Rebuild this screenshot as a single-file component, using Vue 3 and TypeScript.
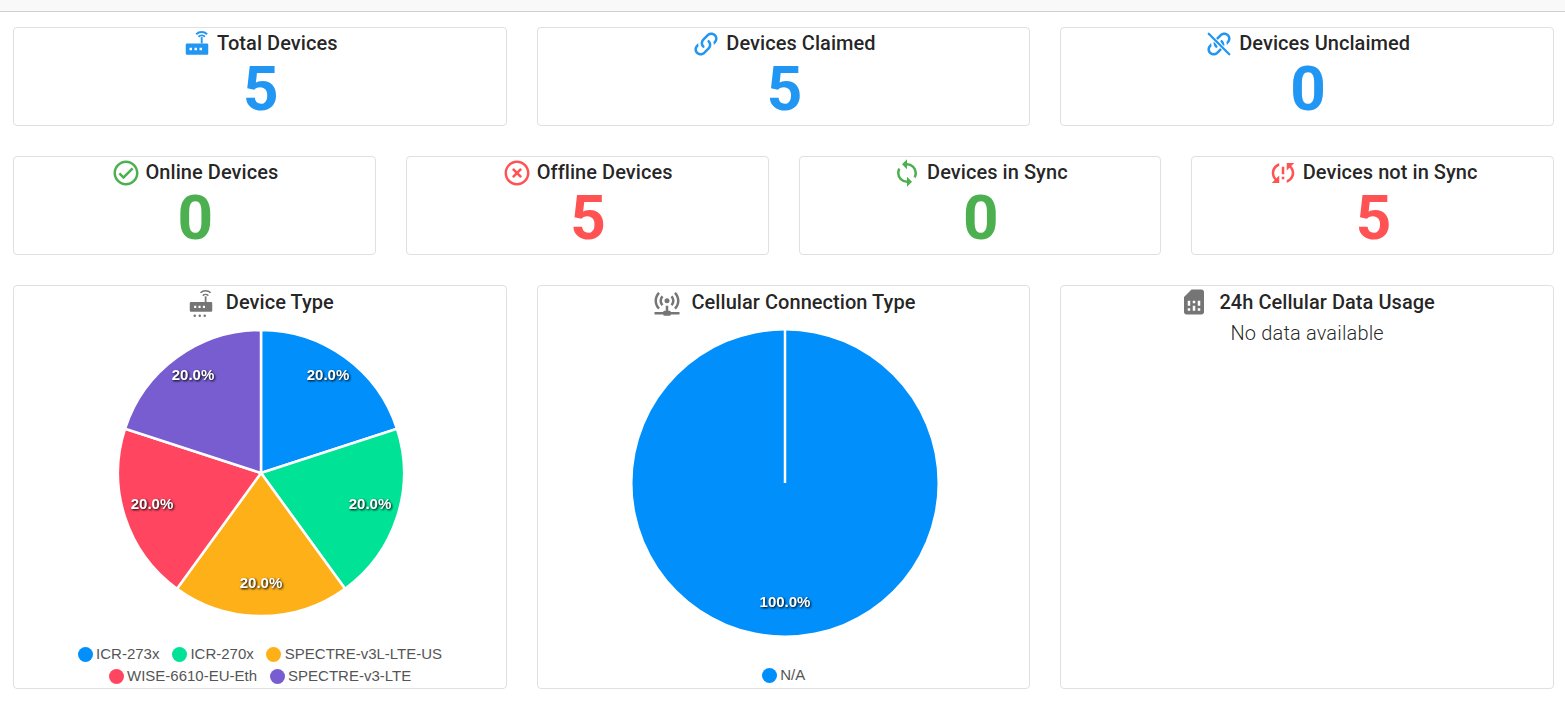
<script setup lang="ts">
interface Slice { d: string; color: string; x: number; y: number; label: string }
interface LegendItem { name: string; color: string; labelX: number; labelY: number }

const icons: Record<string, string> = {
  link: 'M10.59,13.41C11,13.8 11,14.44 10.59,14.83C10.2,15.22 9.56,15.22 9.17,14.83C7.22,12.88 7.22,9.71 9.17,7.76V7.76L12.71,4.22C14.66,2.27 17.83,2.27 19.78,4.22C21.73,6.17 21.73,9.34 19.78,11.29L18.29,12.78C18.3,11.96 18.17,11.14 17.89,10.36L18.36,9.88C19.54,8.71 19.54,6.81 18.36,5.64C17.19,4.46 15.29,4.46 14.12,5.64L10.59,9.17C9.41,10.34 9.41,12.24 10.59,13.41M13.41,9.17C13.8,8.78 14.44,8.78 14.83,9.17C16.78,11.12 16.78,14.29 14.83,16.24V16.24L11.29,19.78C9.34,21.73 6.17,21.73 4.22,19.78C2.27,17.83 2.27,14.66 4.22,12.71L5.71,11.22C5.7,12.04 5.83,12.86 6.11,13.65L5.64,14.12C4.46,15.29 4.46,17.19 5.64,18.36C6.81,19.54 8.71,19.54 9.88,18.36L13.41,14.83C14.59,13.66 14.59,11.76 13.41,10.59C13,10.2 13,9.56 13.41,9.17Z',
  check: 'M12 2C6.5 2 2 6.5 2 12S6.5 22 12 22 22 17.5 22 12 17.5 2 12 2M12 20C7.59 20 4 16.41 4 12S7.59 4 12 4 20 7.59 20 12 16.41 20 12 20M16.59 7.58L10 14.17L7.41 11.59L6 13L10 17L18 9L16.59 7.58Z',
  close: 'M12,20C7.59,20 4,16.41 4,12C4,7.59 7.59,4 12,4C16.41,4 20,7.59 20,12C20,16.41 16.41,20 12,20M12,2C6.47,2 2,6.47 2,12C2,17.53 6.47,22 12,22C17.53,22 22,17.53 22,12C22,6.47 17.53,2 12,2M14.59,8L12,10.59L9.41,8L8,9.41L10.59,12L8,14.59L9.41,16L12,13.41L14.59,16L16,14.59L13.41,12L16,9.41L14.59,8Z',
  sync: 'M12,18A6,6 0 0,1 6,12C6,11 6.25,10.03 6.7,9.2L5.24,7.74C4.46,8.97 4,10.43 4,12A8,8 0 0,0 12,20V23L16,19L12,15M12,4V1L8,5L12,9V6A6,6 0 0,1 18,12C18,13 17.75,13.97 17.3,14.8L18.76,16.26C19.54,15.03 20,13.57 20,12A8,8 0 0,0 12,4Z',
  syncAlert: 'M11 13H13V7H11M21 4H15V10L17.24 7.76C18.32 8.85 19 10.34 19 12C19 14.61 17.33 16.83 15 17.65V19.74C18.45 18.85 21 15.73 21 12C21 9.79 20.09 7.8 18.64 6.36M11 17H13V15H11M3 12C3 14.21 3.91 16.2 5.36 17.64L3 20H9V14L6.76 16.24C5.68 15.15 5 13.66 5 12C5 9.39 6.67 7.17 9 6.35V4.26C5.55 5.15 3 8.27 3 12Z',
  access: 'M4.93,3.93C3.12,5.74 2,8.24 2,11C2,13.76 3.12,16.26 4.93,18.07L6.34,16.66C4.89,15.22 4,13.22 4,11C4,8.79 4.89,6.78 6.34,5.34L4.93,3.93M19.07,3.93L17.66,5.34C19.11,6.78 20,8.79 20,11C20,13.22 19.11,15.22 17.66,16.66L19.07,18.07C20.88,16.26 22,13.76 22,11C22,8.24 20.88,5.74 19.07,3.93M7.76,6.76C6.67,7.85 6,9.35 6,11C6,12.65 6.67,14.15 7.76,15.24L9.17,13.83C8.45,13.11 8,12.11 8,11C8,9.89 8.45,8.89 9.17,8.17L7.76,6.76M16.24,6.76L14.83,8.17C15.55,8.89 16,9.89 16,11C16,12.11 15.55,13.11 14.83,13.83L16.24,15.24C17.33,14.15 18,12.65 18,11C18,9.35 17.33,7.85 16.24,6.76M12,9A2,2 0 0,0 10,11A2,2 0 0,0 12,13A2,2 0 0,0 14,11A2,2 0 0,0 12,9M11,15V19H10A1,1 0 0,0 9,20H2V22H9A1,1 0 0,0 10,23H14A1,1 0 0,0 15,22H22V20H15A1,1 0 0,0 14,19H13V15H11Z',
  sim: 'M19.99 4c0-1.1-.89-2-1.99-2h-8L4 8v12c0 1.1.9 2 2 2h12c1.1 0 2-.9 2-2l-.01-16zM9 19H7v-2h2v2zm8 0h-2v-2h2v2zm-8-4H7v-4h2v4zm4 4h-2v-4h2v4zm0-6h-2v-2h2v2zm4 2h-2v-4h2v4z',
  routerBody: 'M4,11.5H20A1,1 0 0,1 21,12.5V19.5A1,1 0 0,1 20,20.5H4A1,1 0 0,1 3,19.5V12.5A1,1 0 0,1 4,11.5ZM6,15V17H8V15ZM10,15V17H12V15ZM14,15V17H16V15Z',
  routerSmall: 'M4,12H20A1,1 0 0,1 21,13V18.8A1,1 0 0,1 20,19.8H4A1,1 0 0,1 3,18.8V13A1,1 0 0,1 4,12ZM6.5,15V16.7H8.2V15ZM10,15V16.7H11.7V15ZM13.5,15V16.7H15.2V15Z'
}

const stats = [
  { title: 'Total Devices', value: 5, tone: 'blue', icon: 'router' },
  { title: 'Devices Claimed', value: 5, tone: 'blue', icon: 'link' },
  { title: 'Devices Unclaimed', value: 0, tone: 'blue', icon: 'unlink' }
]
const health = [
  { title: 'Online Devices', value: 0, tone: 'green', icon: 'check' },
  { title: 'Offline Devices', value: 5, tone: 'red', icon: 'close' },
  { title: 'Devices in Sync', value: 0, tone: 'green', icon: 'sync' },
  { title: 'Devices not in Sync', value: 5, tone: 'red', icon: 'syncAlert' }
]

const legend: LegendItem[] = [
  { name: 'ICR-273x', color: '#008FFB', labelX: 67, labelY: -99 },
  { name: 'ICR-270x', color: '#00E396', labelX: 109, labelY: 30 },
  { name: 'SPECTRE-v3L-LTE-US', color: '#FEB019', labelX: 0, labelY: 109 },
  { name: 'WISE-6610-EU-Eth', color: '#FF4560', labelX: -109, labelY: 30 },
  { name: 'SPECTRE-v3-LTE', color: '#775DD0', labelX: -68, labelY: -99 }
]

const cx = 145
const cy = 145
const r = 143
const slices: Slice[] = legend.map((item, i) => {
  const a0 = (i / 5) * 2 * Math.PI - Math.PI / 2
  const a1 = ((i + 1) / 5) * 2 * Math.PI - Math.PI / 2
  const p = (a: number, rad: number) => `${cx + rad * Math.cos(a)} ${cy + rad * Math.sin(a)}`
  return {
    d: `M${cx} ${cy}L${p(a0, r)}A${r} ${r} 0 0 1 ${p(a1, r)}Z`,
    color: item.color,
    x: cx + item.labelX,
    y: cy + item.labelY,
    label: '20.0%'
  }
})
</script>

<template>
  <div class="page">
    <div class="topbar"></div>
    <main class="main">
      <section class="grid three">
        <div v-for="s in stats" :key="s.title" class="card stat">
          <div class="title">
            <svg class="icon" :class="s.tone" viewBox="0 0 24 24">
              <template v-if="s.icon === 'router'">
                <path fill-rule="evenodd" :d="icons.routerBody" />
                <rect x="15" y="6.5" width="1.5" height="5" />
                <path class="arc" d="M13.2 6.2a3.6 3.6 0 0 1 5.1 0" />
                <path class="arc" d="M11.4 4.2a6.2 6.2 0 0 1 8.7 0" />
              </template>
              <template v-else-if="s.icon === 'unlink'">
                <path :d="icons.link" />
                <line class="slash-gap" x1="3.8" y1="3.8" x2="20.2" y2="20.2" />
                <line class="slash" x1="3.8" y1="3.8" x2="20.2" y2="20.2" />
              </template>
              <path v-else :d="icons[s.icon]" />
            </svg>
            <span>{{ s.title }}</span>
          </div>
          <div class="value" :class="s.tone">{{ s.value }}</div>
        </div>
      </section>

      <section class="grid four">
        <div v-for="s in health" :key="s.title" class="card stat">
          <div class="title">
            <svg class="icon" :class="s.tone" viewBox="0 0 24 24"><path :d="icons[s.icon]" /></svg>
            <span>{{ s.title }}</span>
          </div>
          <div class="value" :class="s.tone">{{ s.value }}</div>
        </div>
      </section>

      <section class="grid three charts">
        <div class="card chart-card">
          <div class="title wide">
            <svg class="icon grey" viewBox="0 0 24 24">
              <path fill-rule="evenodd" :d="icons.routerSmall" />
              <rect x="15" y="7.5" width="1.4" height="5" />
              <path class="arc thin" d="M13.4 6.9a3.2 3.2 0 0 1 4.5 0" />
              <path class="arc thin" d="M11.6 4.6a5.7 5.7 0 0 1 8.1 0" />
              <circle cx="7" cy="23" r="1" /><circle cx="11" cy="23" r="1" /><circle cx="15" cy="23" r="1" />
            </svg>
            <span>Device Type</span>
          </div>
          <svg class="pie" width="290" height="290" viewBox="0 0 290 290">
            <path v-for="s in slices" :key="s.color" :d="s.d" :fill="s.color" stroke="#fff" stroke-width="2.5" />
            <text v-for="s in slices" :key="'l' + s.color" class="pct" :x="s.x" :y="s.y" text-anchor="middle" dominant-baseline="central">{{ s.label }}</text>
          </svg>
          <div class="legend">
            <span v-for="l in legend" :key="l.name" class="legend-item">
              <i class="dot" :style="{ background: l.color }"></i>{{ l.name }}
            </span>
          </div>
        </div>

        <div class="card chart-card">
          <div class="title wide">
            <svg class="icon grey" viewBox="0 0 24 24"><path :d="icons.access" /></svg>
            <span>Cellular Connection Type</span>
          </div>
          <svg class="pie large" width="308" height="310" viewBox="0 0 308 310">
            <circle cx="154" cy="155" r="152.5" fill="#008FFB" />
            <line x1="154" y1="2" x2="154" y2="155" stroke="#fff" stroke-width="2.5" />
            <text class="pct" x="154" y="273" text-anchor="middle" dominant-baseline="central">100.0%</text>
          </svg>
          <div class="legend single">
            <span class="legend-item"><i class="dot" style="background: #008FFB"></i>N/A</span>
          </div>
        </div>

        <div class="card chart-card">
          <div class="title wide">
            <svg class="icon grey" viewBox="0 0 24 24"><path :d="icons.sim" /></svg>
            <span>24h Cellular Data Usage</span>
          </div>
          <p class="empty">No data available</p>
        </div>
      </section>
    </main>
  </div>
</template>

<style scoped>
.page {
  font-family: Roboto, "Liberation Sans", sans-serif;
  color: rgba(0, 0, 0, 0.87);
}
.topbar {
  height: 11px;
  background: #f9f9f9;
  border-bottom: 1px solid #cfcfcf;
}
.main {
  display: flex;
  flex-direction: column;
  gap: 30px;
  padding: 15px 11px 0 13px;
}
.grid {
  display: grid;
  gap: 30px;
}
.three {
  grid-template-columns: repeat(3, 1fr);
}
.four {
  grid-template-columns: repeat(4, 1fr);
}
.card {
  box-sizing: border-box;
  background: #fff;
  border: 1px solid #e0e0e0;
  border-radius: 4px;
}
.stat {
  height: 99px;
  padding-top: 1px;
}
.title {
  display: flex;
  align-items: center;
  justify-content: center;
  gap: 5px;
  height: 30px;
  font-size: 20px;
  font-weight: 500;
  letter-spacing: 0.05px;
  line-height: 30px;
}
.stat .title span {
  margin-bottom: 2px;
}
.title.wide {
  gap: 10px;
  margin-top: 1px;
}
.icon {
  width: 30px;
  height: 30px;
  flex: none;
  fill: currentColor;
}
.arc {
  fill: none;
  stroke: currentColor;
  stroke-width: 1.5;
}
.arc.thin {
  stroke-width: 1.2;
}
.slash {
  stroke: currentColor;
  stroke-width: 1.8;
  stroke-linecap: round;
}
.slash-gap {
  stroke: #fff;
  stroke-width: 3.2;
}
.blue { color: #2196f3; }
.green { color: #4caf50; }
.red { color: #ff5252; }
.grey { color: #757575; }
.value {
  padding-left: 2px;
  font-size: 62px;
  font-weight: 700;
  line-height: 60px;
  text-align: center;
}
.charts {
  height: 404px;
}
.chart-card {
  display: flex;
  flex-direction: column;
  align-items: center;
}
.pie {
  flex: none;
  margin-left: 2px;
  margin-top: 11px;
}
.pie.large {
  margin-left: 3px;
}
.pct {
  font-family: "Liberation Sans", Arial, sans-serif;
  font-size: 15px;
  font-weight: 700;
  fill: #fff;
  filter: drop-shadow(1px 1px 1px #000);
}
.legend {
  margin-top: auto;
  padding-bottom: 1px;
  display: flex;
  flex-wrap: wrap;
  justify-content: center;
  column-gap: 12.5px;
  width: 100%;
  font-family: "Liberation Sans", Arial, sans-serif;
  font-size: 15px;
  line-height: 22px;
  color: #555;
}
.legend.single {
  padding-bottom: 2px;
}
.legend-item {
  display: inline-flex;
  align-items: center;
  white-space: nowrap;
}
.dot {
  width: 15px;
  height: 15px;
  border-radius: 50%;
  margin-right: 3.5px;
}
.empty {
  margin: 2px 0 0;
  font-size: 20px;
  font-weight: 300;
  letter-spacing: 0.17px;
  line-height: 28px;
  text-align: center;
}
</style>

<style>
html, body {
  background: #fff;
}
</style>
